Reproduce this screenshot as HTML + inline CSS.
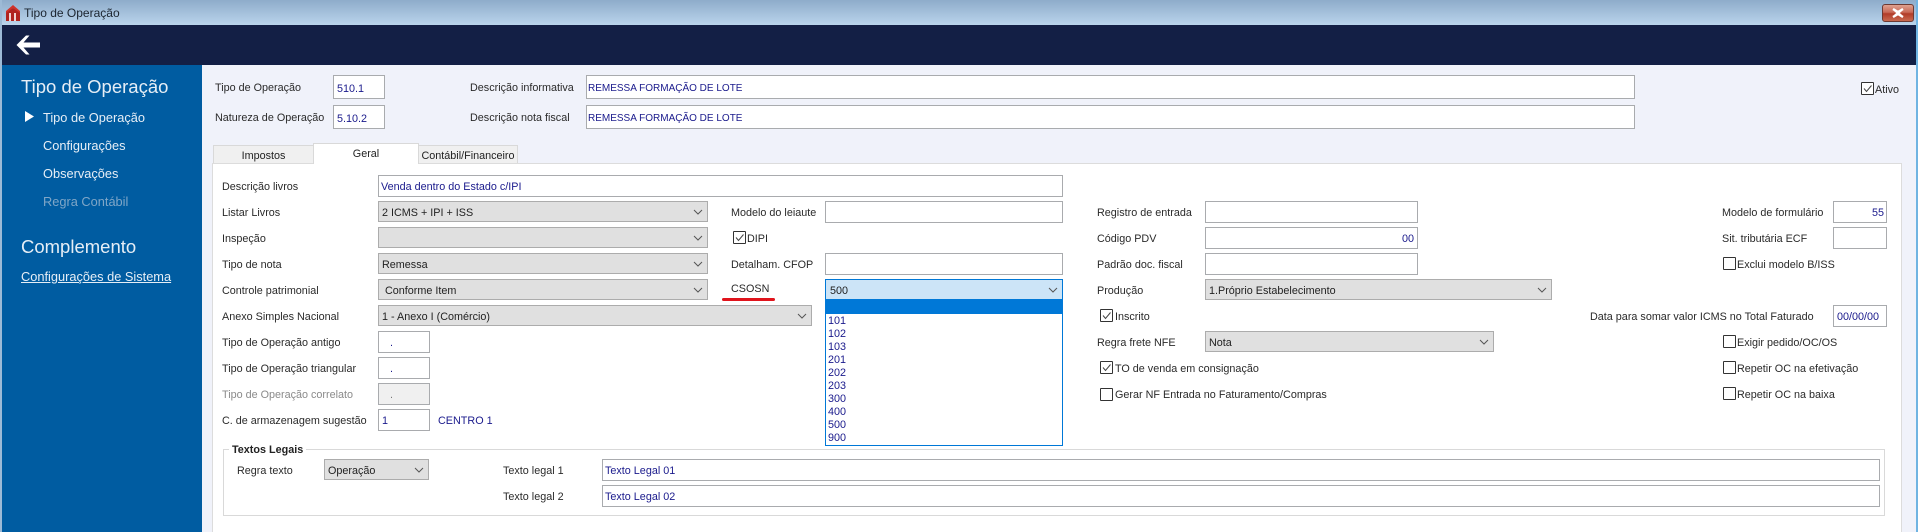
<!DOCTYPE html>
<html lang="pt"><head><meta charset="utf-8"><title>Tipo de Operação</title>
<style>
html,body{margin:0;padding:0;width:1918px;height:532px;overflow:hidden;background:#f0f2fa}
body{position:relative;font-family:"Liberation Sans",sans-serif;font-size:10.8px;color:#222}
.a,.l,.f,.s,.c,.t{position:absolute;box-sizing:border-box;white-space:nowrap}
.l{height:14px;line-height:16px;color:#2a2a2a}
.f{background:#fff;border:1px solid #a9abae;color:#1a1a8c;line-height:22px;padding-left:2px;height:22px}
.s{background:#e0e0e0;border:1px solid #acacac;line-height:22px;padding-left:3px;height:21px;color:#222}
.s svg{position:absolute;right:4px;top:7px}
.c{width:13px;height:13px;border:1px solid #333;background:#fff;border-radius:1px}
.c svg{position:absolute;left:0;top:0}
.t{height:14px;line-height:16px;color:#1a1a8c}
.side{color:#e6eef6}
.u{font-size:10px;padding-left:1px}
</style></head><body>
<!-- window -->
<div class="a" style="left:0;top:0;width:1918px;height:25px;background:linear-gradient(#8eacca,#bad4ec)"></div>
<div class="a" style="left:0;top:0;width:2px;height:532px;background:#9dbad6"></div>
<div class="a" style="left:1916px;top:0;width:2px;height:532px;background:#6fb4e2"></div>
<svg class="a" style="left:6px;top:4px" width="14" height="17" viewBox="0 0 14 17"><path d="M0 7L7 1l7 6v3L7 4 0 10z" fill="#d0322a"/><path d="M0 9l7-5 7 5v8H0z" fill="#b0231f"/><path d="M4 9v8M9 9v8" stroke="#fff" stroke-width="1.600"/></svg>
<div class="a" style="left:24px;top:6px;font-size:12px;line-height:15px;color:#1c2530">Tipo de Operação</div>
<div class="a" style="left:1882px;top:4px;width:32px;height:18px;border:1px solid #6d3a33;border-radius:3px;background:linear-gradient(#dfa18f,#c96b58 45%,#b23c28 55%,#c96a50)"></div>
<svg class="a" style="left:1891px;top:8px" width="14" height="10" viewBox="0 0 14 10"><path d="M2 1l5 3 5-3M2 9l5-3 5 3M3 1.500L11 8.500M11 1.500L3 8.500" stroke="#fff" stroke-width="2.400" fill="none"/></svg>
<!-- navy -->
<div class="a" style="left:2px;top:25px;width:1914px;height:40px;background:#131f45"></div>
<svg class="a" style="left:15px;top:33px" width="26" height="24" viewBox="0 0 26 24"><path d="M1.500 12L11 2.500l3.500 0L8.500 9.500H25v5H8.500l6 7H11z" fill="#fff"/></svg>
<!-- sidebar -->
<div class="a" style="left:2px;top:65px;width:200px;height:467px;background:#005ca1"></div>
<div class="a side" style="left:21px;top:76px;font-size:18.500px;line-height:22px">Tipo de Operação</div>
<svg class="a" style="left:25px;top:111px" width="9" height="11"><path d="M0 0L9 5.500 0 11z" fill="#fff"/></svg>
<div class="a side" style="left:43px;top:110px;font-size:12.800px;line-height:16px">Tipo de Operação</div>
<div class="a side" style="left:43px;top:138px;font-size:12.800px;line-height:16px">Configurações</div>
<div class="a side" style="left:43px;top:166px;font-size:12.800px;line-height:16px">Observações</div>
<div class="a" style="left:43px;top:194px;font-size:12.800px;line-height:16px;color:#7fa6c7">Regra Contábil</div>
<div class="a side" style="left:21px;top:236px;font-size:18.500px;line-height:22px">Complemento</div>
<div class="a side" style="left:21px;top:269px;font-size:12.800px;line-height:16px;text-decoration:underline">Configurações de Sistema</div>
<!-- header -->
<div class="l" style="left:215px;top:80px">Tipo de Operação</div>
<div class="f" style="left:333px;top:75px;width:52px;height:24px;line-height:26px;padding-left:3px">510.1</div>
<div class="l" style="left:470px;top:80px">Descrição informativa</div>
<div class="f u" style="left:586px;top:75px;width:1049px;height:24px;line-height:26px">REMESSA FORMAÇÃO DE LOTE</div>
<div class="l" style="left:215px;top:110px">Natureza de Operação</div>
<div class="f" style="left:333px;top:105px;width:52px;height:24px;line-height:26px;padding-left:3px">5.10.2</div>
<div class="l" style="left:470px;top:110px">Descrição nota fiscal</div>
<div class="f u" style="left:586px;top:105px;width:1049px;height:24px;line-height:26px">REMESSA FORMAÇÃO DE LOTE</div>
<div class="c" style="left:1861px;top:82px"><svg width="11" height="11"><path d="M2 5.500L4.500 8.500 9.500 2.500" stroke="#444" fill="none"/></svg></div>
<div class="l" style="left:1875px;top:82px">Ativo</div>
<!-- tabs -->
<div class="a" style="left:213px;top:145px;width:101px;height:19px;background:#f0f0f0;border:1px solid #d9d9d9;text-align:center;line-height:20px">Impostos</div>
<div class="a" style="left:418px;top:145px;width:100px;height:19px;background:#f0f0f0;border:1px solid #d9d9d9;text-align:center;line-height:20px">Contábil/Financeiro</div>
<div class="a" style="left:212px;top:163px;width:1690px;height:369px;background:#fff;border:1px solid #dcdcdc;border-bottom:0"></div>
<div class="a" style="left:313px;top:143px;width:106px;height:21px;background:#fff;border:1px solid #d9d9d9;border-bottom:0;text-align:center;line-height:20px">Geral</div>
<!-- column 1 -->
<div class="l" style="left:222px;top:179px">Descrição livros</div>
<div class="f" style="left:378px;top:175px;width:685px">Venda dentro do Estado c/IPI</div>
<div class="l" style="left:222px;top:205px">Listar Livros</div>
<div class="s" style="left:378px;top:201px;width:330px">2 ICMS + IPI + ISS<svg width="10" height="6"><path d="M1 1l4 4 4-4" stroke="#555" fill="none"/></svg></div>
<div class="l" style="left:222px;top:231px">Inspeção</div>
<div class="s" style="left:378px;top:227px;width:330px"><svg width="10" height="6"><path d="M1 1l4 4 4-4" stroke="#555" fill="none"/></svg></div>
<div class="l" style="left:222px;top:257px">Tipo de nota</div>
<div class="s" style="left:378px;top:253px;width:330px">Remessa<svg width="10" height="6"><path d="M1 1l4 4 4-4" stroke="#555" fill="none"/></svg></div>
<div class="l" style="left:222px;top:283px">Controle patrimonial</div>
<div class="s" style="left:378px;top:279px;width:330px;padding-left:6px">Conforme Item<svg width="10" height="6"><path d="M1 1l4 4 4-4" stroke="#555" fill="none"/></svg></div>
<div class="l" style="left:222px;top:309px">Anexo Simples Nacional</div>
<div class="s" style="left:378px;top:305px;width:434px">1 - Anexo I (Comércio)<svg width="10" height="6"><path d="M1 1l4 4 4-4" stroke="#555" fill="none"/></svg></div>
<div class="l" style="left:222px;top:335px">Tipo de Operação antigo</div>
<div class="f" style="left:378px;top:331px;width:52px;padding-left:11px">.</div>
<div class="l" style="left:222px;top:361px">Tipo de Operação triangular</div>
<div class="f" style="left:378px;top:357px;width:52px;padding-left:11px">.</div>
<div class="l" style="left:222px;top:387px;color:#8a8a8a">Tipo de Operação correlato</div>
<div class="f" style="left:378px;top:383px;width:52px;padding-left:11px;background:#f0f0f0;color:#777">.</div>
<div class="l" style="left:222px;top:413px">C. de armazenagem sugestão</div>
<div class="f" style="left:378px;top:409px;width:52px;padding-left:3px">1</div>
<div class="t" style="left:438px;top:413px">CENTRO 1</div>
<!-- column 2 -->
<div class="l" style="left:731px;top:205px">Modelo do leiaute</div>
<div class="f" style="left:825px;top:201px;width:238px"></div>
<div class="c" style="left:733px;top:231px"><svg width="11" height="11"><path d="M2 5.500L4.500 8.500 9.500 2.500" stroke="#444" fill="none"/></svg></div>
<div class="l" style="left:747px;top:231px">DIPI</div>
<div class="l" style="left:731px;top:257px">Detalham. CFOP</div>
<div class="f" style="left:825px;top:253px;width:238px"></div>
<div class="l" style="left:731px;top:281px">CSOSN</div>
<div class="a" style="left:722px;top:298px;width:53px;height:3px;background:#e0141c;border-radius:2px"></div>
<div class="s" style="left:825px;top:279px;width:238px;height:21px;background:#cce4f7;border-color:#0078d7;padding-left:4px">500<svg width="10" height="6"><path d="M1 1l4 4 4-4" stroke="#555" fill="none"/></svg></div>
<div class="a" style="left:825px;top:299px;width:238px;height:147px;background:#fff;border:1px solid #0078d7"></div>
<div class="a" style="left:826px;top:300px;width:236px;height:14px;background:#0078d7"></div>
<div class="a" style="left:828px;top:315px;line-height:13px;color:#1a1a8c">101<br>102<br>103<br>201<br>202<br>203<br>300<br>400<br>500<br>900</div>
<!-- column 3 -->
<div class="l" style="left:1097px;top:205px">Registro de entrada</div>
<div class="f" style="left:1205px;top:201px;width:213px"></div>
<div class="l" style="left:1097px;top:231px">Código PDV</div>
<div class="f" style="left:1205px;top:227px;width:213px;text-align:right;padding-right:3px">00</div>
<div class="l" style="left:1097px;top:257px">Padrão doc. fiscal</div>
<div class="f" style="left:1205px;top:253px;width:213px"></div>
<div class="l" style="left:1097px;top:283px">Produção</div>
<div class="s" style="left:1205px;top:279px;width:347px">1.Próprio Estabelecimento<svg width="10" height="6"><path d="M1 1l4 4 4-4" stroke="#555" fill="none"/></svg></div>
<div class="c" style="left:1100px;top:309px"><svg width="11" height="11"><path d="M2 5.500L4.500 8.500 9.500 2.500" stroke="#444" fill="none"/></svg></div>
<div class="l" style="left:1115px;top:309px">Inscrito</div>
<div class="l" style="left:1097px;top:335px">Regra frete NFE</div>
<div class="s" style="left:1205px;top:331px;width:289px">Nota<svg width="10" height="6"><path d="M1 1l4 4 4-4" stroke="#555" fill="none"/></svg></div>
<div class="c" style="left:1100px;top:361px"><svg width="11" height="11"><path d="M2 5.500L4.500 8.500 9.500 2.500" stroke="#444" fill="none"/></svg></div>
<div class="l" style="left:1115px;top:361px">TO de venda em consignação</div>
<div class="c" style="left:1100px;top:388px"></div>
<div class="l" style="left:1115px;top:387px">Gerar NF Entrada no Faturamento/Compras</div>
<!-- column 4 -->
<div class="l" style="left:1722px;top:205px">Modelo de formulário</div>
<div class="f" style="left:1833px;top:201px;width:54px;text-align:right;padding-right:2px">55</div>
<div class="l" style="left:1722px;top:231px">Sit. tributária ECF</div>
<div class="f" style="left:1833px;top:227px;width:54px"></div>
<div class="c" style="left:1723px;top:257px"></div>
<div class="l" style="left:1737px;top:257px">Exclui modelo B/ISS</div>
<div class="l" style="left:1590px;top:309px">Data para somar valor ICMS no Total Faturado</div>
<div class="f" style="left:1833px;top:305px;width:54px;padding-left:3px">00/00/00</div>
<div class="c" style="left:1723px;top:335px"></div>
<div class="l" style="left:1737px;top:335px">Exigir pedido/OC/OS</div>
<div class="c" style="left:1723px;top:361px"></div>
<div class="l" style="left:1737px;top:361px">Repetir OC na efetivação</div>
<div class="c" style="left:1723px;top:387px"></div>
<div class="l" style="left:1737px;top:387px">Repetir OC na baixa</div>
<!-- group -->
<div class="a" style="left:223px;top:449px;width:1662px;height:67px;border:1px solid #d9d9d9"></div>
<div class="a" style="left:229px;top:442px;padding:0 3px;background:#fff;font-weight:bold;line-height:16px;color:#222">Textos Legais</div>
<div class="l" style="left:237px;top:463px">Regra texto</div>
<div class="s" style="left:324px;top:459px;width:105px">Operação<svg width="10" height="6"><path d="M1 1l4 4 4-4" stroke="#555" fill="none"/></svg></div>
<div class="l" style="left:503px;top:463px">Texto legal 1</div>
<div class="f" style="left:602px;top:459px;width:1278px">Texto Legal 01</div>
<div class="l" style="left:503px;top:489px">Texto legal 2</div>
<div class="f" style="left:602px;top:485px;width:1278px">Texto Legal 02</div>
</body></html>
